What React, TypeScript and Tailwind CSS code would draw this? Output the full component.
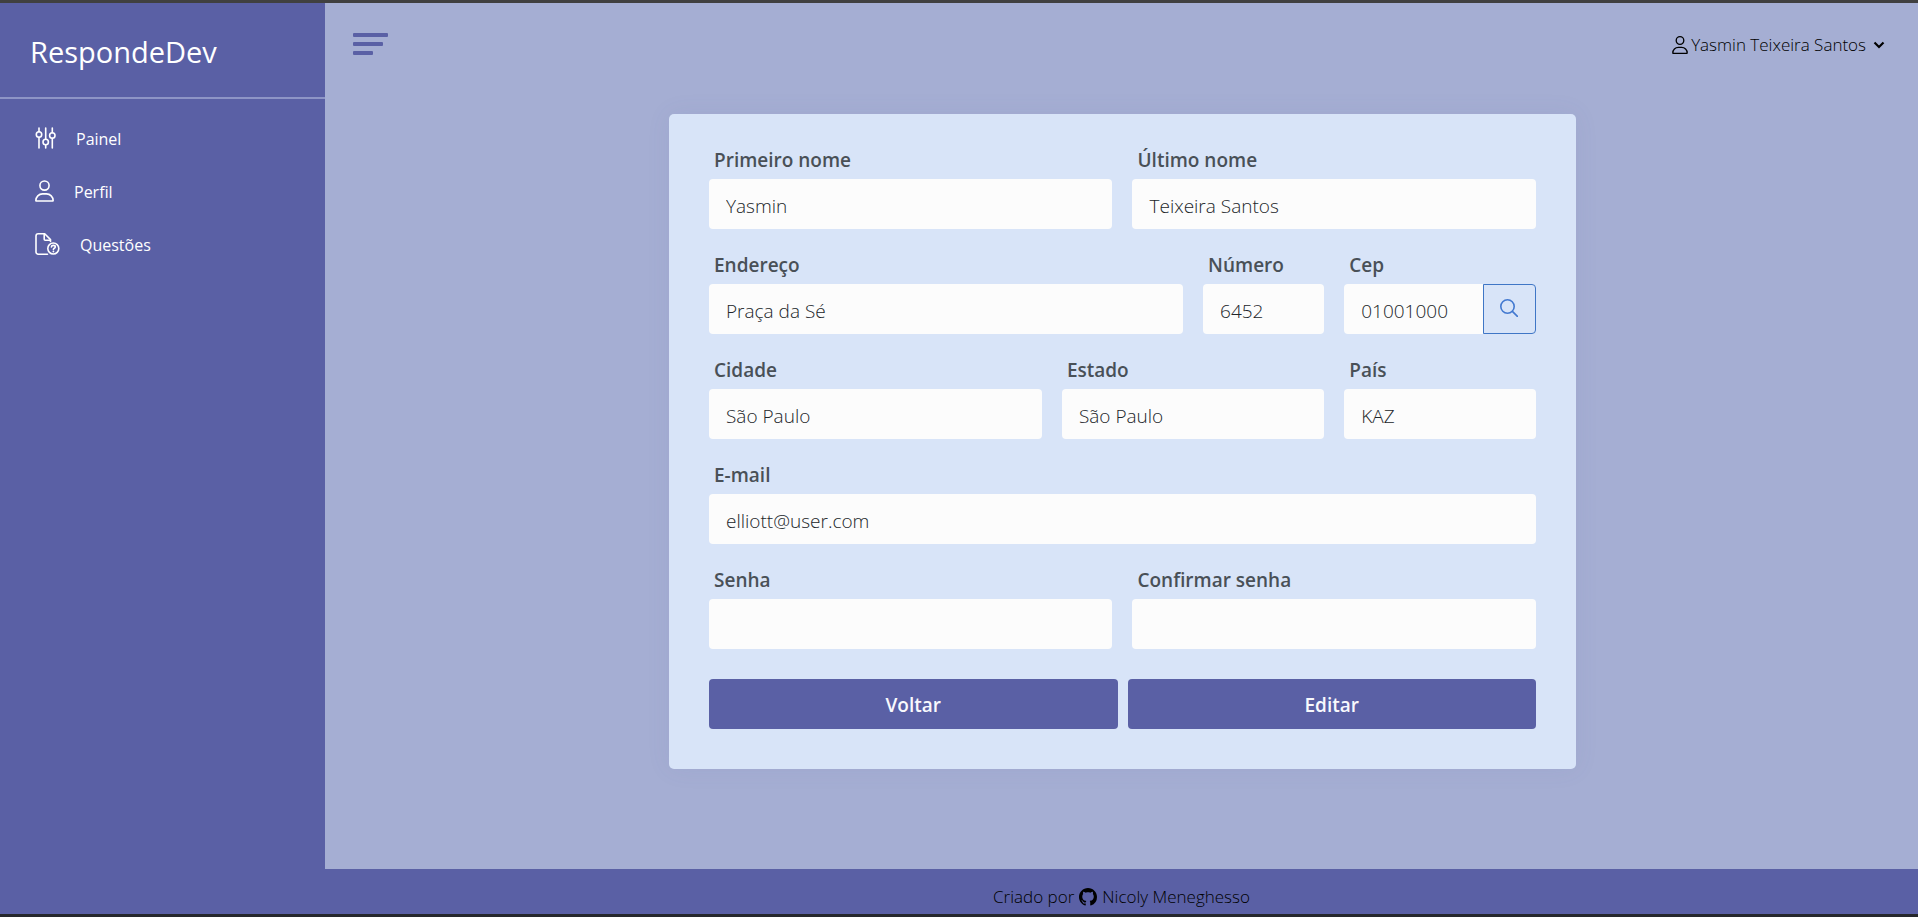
import React from "react";
import { BsGithub } from "react-icons/bs";

function UserIcon({ className, stroke }: { className: string; stroke: number }) {
  return (
    <svg viewBox="0 0 448 512" fill="none" stroke="currentColor" strokeWidth={stroke} strokeLinejoin="round" className={className} aria-hidden="true">
      <circle cx="224" cy="128" r="108" />
      <path d="M20 482c0-88 69-158 157-158h94c88 0 157 70 157 158 0 6-5 10-11 10H31c-6 0-11-4-11-10z" />
    </svg>
  );
}

function SlidersIcon() {
  return (
    <svg viewBox="0 0 21 22" fill="none" stroke="currentColor" strokeWidth="1.600" strokeLinecap="round" className="h-[22px] w-[21px]" aria-hidden="true">
      <circle cx="4" cy="7.5" r="2.7" />
      <circle cx="10.7" cy="15" r="2.7" />
      <circle cx="17.3" cy="8.5" r="2.7" />
      <path d="M4 1v3.800M4 10.300V21M10.700 1v11.300M10.700 17.800V21M17.300 1v4.800M17.300 11.300V21" />
    </svg>
  );
}

function FileQuestionIcon() {
  return (
    <svg viewBox="0 0 25 22" fill="none" stroke="currentColor" strokeWidth="1.600" strokeLinecap="round" strokeLinejoin="round" className="h-[22px] w-[25px]" aria-hidden="true">
      <path d="M12.500 21.200H3.200A2.200 2.200 0 0 1 1 19V3A2.200 2.200 0 0 1 3.200.8h6.500L15.500 6.600V8.500" />
      <path d="M9.200 1v5.200c0 .6.400 1 1 1h5" />
      <circle cx="18.300" cy="15.500" r="5.500" />
      <path d="M16.400 14c.1-1.100.9-1.600 1.900-1.600 1.200 0 2 .6 2 1.600 0 1.200-1.900 1.300-1.900 2.400" />
      <path d="M18.400 18.400v.1" strokeWidth="1.800" />
    </svg>
  );
}

const menu = [
  { label: "Painel", icon: <SlidersIcon /> },
  { label: "Perfil", icon: <UserIcon className="h-[22px] w-[19px]" stroke={38} /> },
  { label: "Questões", icon: <FileQuestionIcon /> },
];

const inputClass =
  "h-[50px] w-full min-w-0 rounded-[4px] bg-[#fcfcfc] px-[17px] pt-[3px] text-[19px] font-light text-[#212529] outline-none";

function Field({
  id,
  label,
  value,
  span,
  type = "text",
}: {
  id: string;
  label: string;
  value: string;
  span: string;
  type?: string;
}) {
  return (
    <div className={span}>
      <FieldLabel id={id} label={label} />
      <input id={id} type={type} defaultValue={value} className={inputClass} />
    </div>
  );
}

function FieldLabel({ id, label }: { id: string; label: string }) {
  return (
    <label htmlFor={id} className="mb-[5px] block pl-[5px] text-[19px] leading-7 font-semibold text-[#495057]">
      {label}
    </label>
  );
}

export default function App() {
  return (
    <div className="flex min-h-screen flex-col border-t-[3px] border-b-[3px] border-t-[#404040] border-b-[#25272c] bg-[#a5aed3] font-['Open_Sans','Noto_Sans',sans-serif]">
      <div className="flex flex-1">
        <aside className="w-[325px] shrink-0 bg-[#5a60a5] text-white">
          <div className="flex h-[96px] items-center border-b-2 border-[#8e95c6] pt-1 pl-[30px]">
            <span className="text-[29px] leading-10">RespondeDev</span>
          </div>
          <nav className="pt-[12px]">
            <ul>
              {menu.map((item) => (
                <li key={item.label}>
                  <a href="#" className="flex h-[53px] items-center gap-5 pl-[35px] text-[16px]">
                    {item.icon}
                    <span className="pt-[2px]">{item.label}</span>
                  </a>
                </li>
              ))}
            </ul>
          </nav>
        </aside>

        <div className="flex min-w-0 flex-1 flex-col">
          <header className="flex h-[82px] items-center justify-between pr-[33px] pl-7">
            <button type="button" aria-label="Menu" className="flex flex-col gap-[5px]">
              <span className="h-1 w-[35px] rounded-[1px] bg-[#5a60a5]" />
              <span className="h-1 w-[30px] rounded-[1px] bg-[#5a60a5]" />
              <span className="h-1 w-5 rounded-[1px] bg-[#5a60a5]" />
            </button>
            <button type="button" className="flex items-center pt-[2px] text-[17px] font-light text-black">
              <UserIcon className="mr-[3px] h-[18px] w-4" stroke={38} />
              Yasmin Teixeira Santos
              <svg viewBox="0 0 12 8" fill="none" stroke="currentColor" strokeWidth="2.200" className="ml-[7px] h-2 w-3" aria-hidden="true">
                <path d="M1.500 1.500 6 6l4.500-4.500" />
              </svg>
            </button>
          </header>

          <main className="flex flex-1 justify-center pt-[29px] pb-[100px] pl-[2px]">
            <form className="w-full max-w-[907px] self-start rounded-[5px] bg-[#d8e4f8] px-10 pt-8 pb-10 shadow-[0_0_24px_rgba(90,96,165,0.08)]">
              <div className="grid grid-cols-12 gap-x-5 gap-y-[22px]">
                <Field id="first" label="Primeiro nome" value="Yasmin" span="col-span-6" />
                <Field id="last" label="Último nome" value="Teixeira Santos" span="col-span-6" />
                <Field id="street" label="Endereço" value="Praça da Sé" span="col-span-7" />
                <Field id="number" label="Número" value="6452" span="col-span-2" />
                <div className="col-span-3">
                  <FieldLabel id="cep" label="Cep" />
                  <div className="flex">
                    <input id="cep" type="text" defaultValue="01001000" className={`${inputClass} rounded-r-none`} />
                    <button
                      type="button"
                      aria-label="Buscar"
                      className="flex h-[50px] w-[53px] shrink-0 items-center justify-center rounded-r-[4px] border border-[#3f76c6] pb-[2px] text-[#4379d0]"
                    >
                      <svg viewBox="0 0 18 18" fill="none" stroke="currentColor" strokeWidth="1.600" strokeLinecap="round" className="h-[18px] w-[18px]" aria-hidden="true">
                        <circle cx="7.500" cy="7.500" r="6.700" />
                        <path d="m12.400 12.400 5 5" />
                      </svg>
                    </button>
                  </div>
                </div>
                <Field id="city" label="Cidade" value="São Paulo" span="col-span-5" />
                <Field id="state" label="Estado" value="São Paulo" span="col-span-4" />
                <Field id="country" label="País" value="KAZ" span="col-span-3" />
                <Field id="email" label="E-mail" value="elliott@user.com" span="col-span-12" type="email" />
                <Field id="password" label="Senha" value="" span="col-span-6" type="password" />
                <Field id="confirm" label="Confirmar senha" value="" span="col-span-6" type="password" />
              </div>
              <div className="mt-[30px] flex gap-[10px] text-[19px] font-semibold text-[#f8f9fd]">
                <button type="button" className="h-[50px] flex-1 rounded-[4px] bg-[#5a60a5] pt-[2px]">
                  Voltar
                </button>
                <button type="submit" className="h-[50px] flex-1 rounded-[4px] bg-[#5a60a5] pt-[2px]">
                  Editar
                </button>
              </div>
            </form>
          </main>

          <footer className="flex h-[45px] items-center justify-center bg-[#5a60a5] pt-[11px] text-[17px] font-light text-black">
            Criado por
            <a href="#" className="ml-[5px] flex items-center gap-[5px]">
              <BsGithub className="h-[18px] w-[18px]" aria-hidden="true" />
              Nicoly Meneghesso
            </a>
          </footer>
        </div>
      </div>
    </div>
  );
}
